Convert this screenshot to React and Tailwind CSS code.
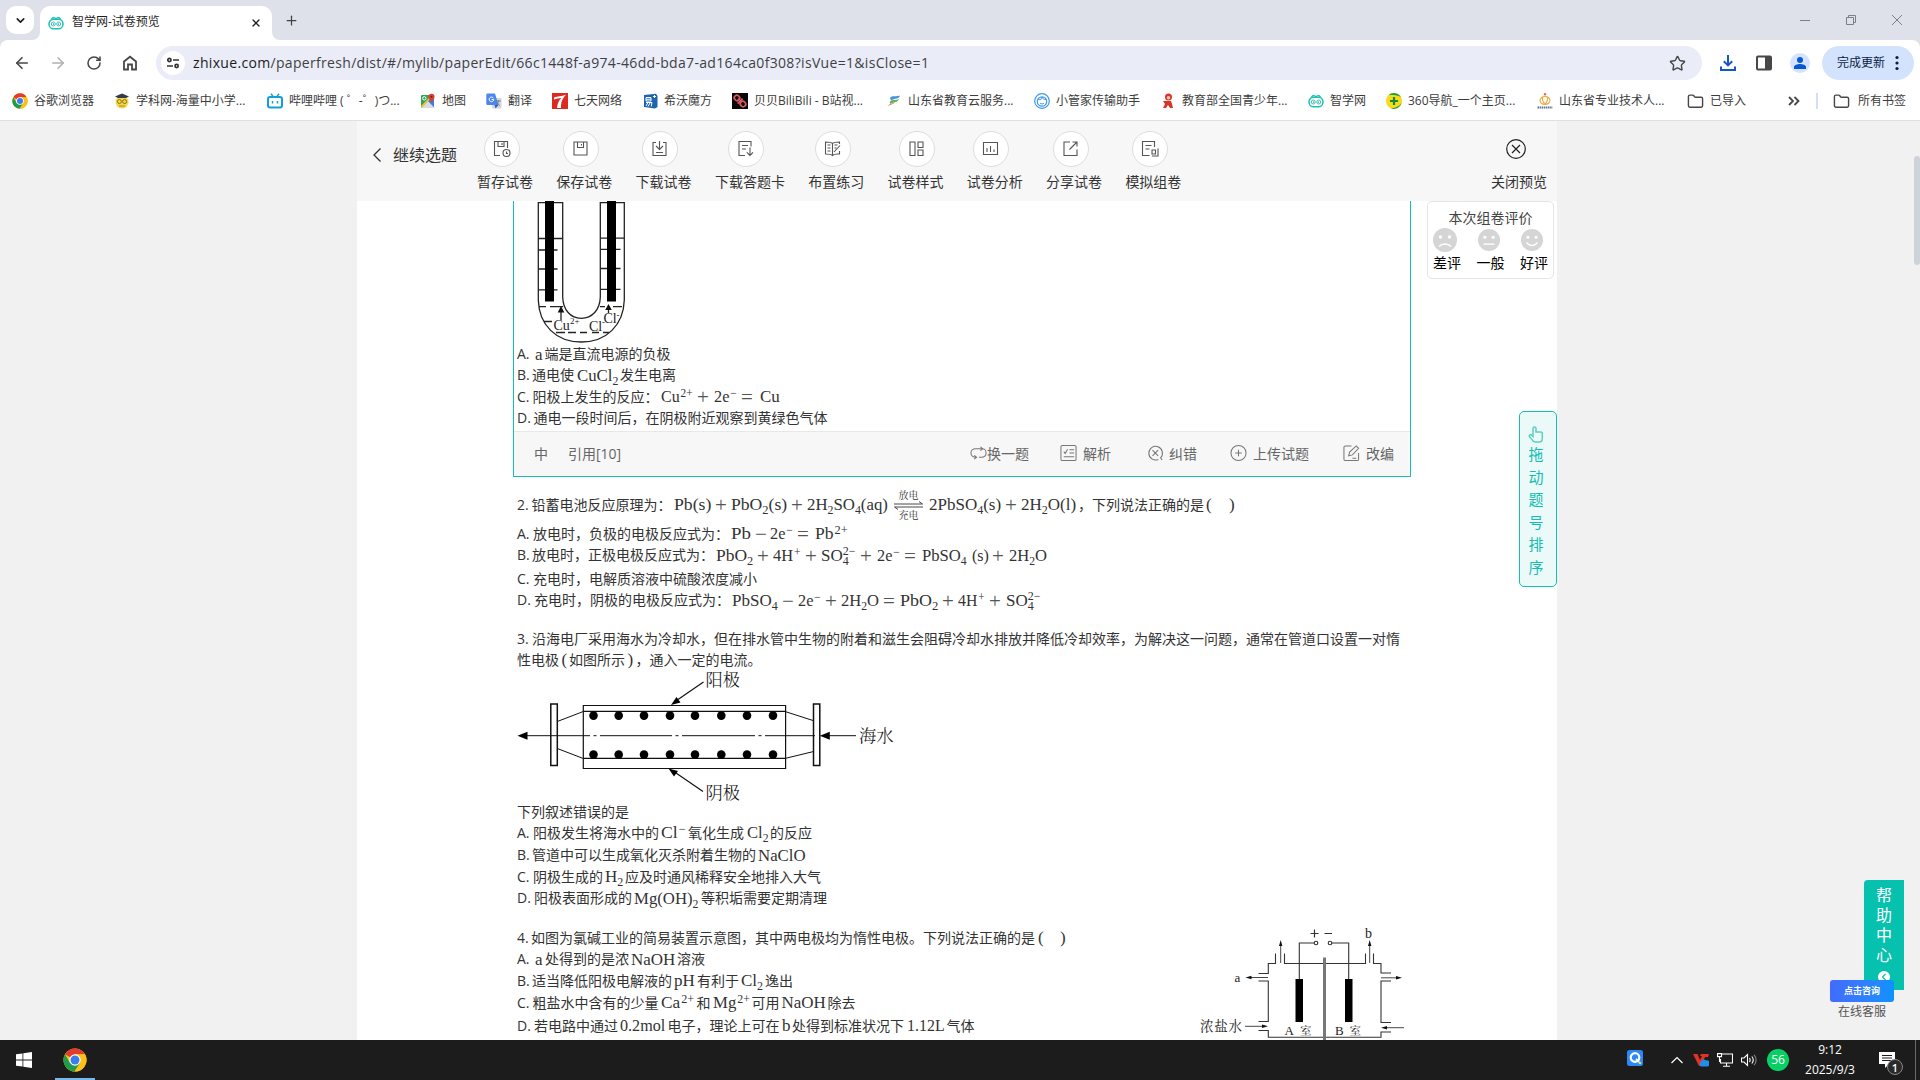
import React, { useLayoutEffect, useRef } from "react";
import { ArrowLeft, ArrowRight, RotateCw, Star, ChevronDown, Plus, X, Folder } from "lucide-react";

const UI = "font-['Open_Sans','Noto_Sans_CJK_SC',sans-serif]";

/* ---------- shared logos ---------- */
function ChromeLogo({ size = 16 }) {
  return (
    <svg width={size} height={size} viewBox="0 0 24 24">
      <circle cx="12" cy="12" r="11.5" fill="#fbc116" />
      <path d="M12 12 2.04 6.25A11.5 11.5 0 0 1 21.96 6.25H12Z" fill="#e33b2e" />
      <path d="M2.04 6.25A11.5 11.5 0 0 0 11.5 23.5L17 14.9 7 14.9Z" fill="#1e9b4b" />
      <path d="M12 6.25h9.96A11.5 11.5 0 0 1 11.5 23.5L17 14.9Z" fill="#fbc116" />
      <circle cx="12" cy="12" r="5.7" fill="#fff" />
      <circle cx="12" cy="12" r="4.5" fill="#3b7ded" />
    </svg>
  );
}

function ZhixueLogo() {
  return (
    <svg width="16" height="16" viewBox="0 0 16 16" fill="none" stroke="#1fc0b0">
      <rect x="1" y="4.2" width="14" height="9.6" rx="4.6" strokeWidth="1.5" />
      <path d="M3.5 4C5 2 7 2.2 8 4c1-1.8 3-2 4.5 0" strokeWidth="1.4" />
      <circle cx="5.3" cy="9" r="2" strokeWidth="0.9" />
      <circle cx="10.7" cy="9" r="2" strokeWidth="0.9" />
      <circle cx="5.6" cy="9" r="0.6" fill="#333" stroke="none" />
      <circle cx="10.4" cy="9" r="0.6" fill="#333" stroke="none" />
    </svg>
  );
}

const marks = {
  chrome: <ChromeLogo />,
  xueke: (
    <svg width="16" height="16" viewBox="0 0 16 16">
      <circle cx="8" cy="9" r="6.5" fill="#f3d64a" />
      <path d="M1 3.5 8 .5l7 3-3 1.5H4Z" fill="#333a4d" />
      <circle cx="5.4" cy="8.5" r="2" fill="none" stroke="#8b7419" />
      <circle cx="10.6" cy="8.5" r="2" fill="none" stroke="#8b7419" />
      <path d="M5 13h6" stroke="#a98b1f" />
    </svg>
  ),
  bili: (
    <svg width="16" height="16" viewBox="0 0 16 16" fill="none" stroke="#139fd9">
      <rect x="1" y="4" width="14" height="10.5" rx="2" strokeWidth="2" />
      <path d="m4 .8 2 2.6M12 .8l-2 2.6M5.5 8v2.5M10.5 8v2.5" strokeWidth="1.5" />
    </svg>
  ),
  map: (
    <svg width="16" height="16" viewBox="0 0 16 16">
      <rect x="1" y="2" width="13" height="13" rx="1" fill="#34a35a" />
      <path d="M1 15 8 8l7 7Z" fill="#d9dde3" />
      <path d="m8 8 4-4 2 2v8Z" fill="#3b7ded" />
      <path d="M1 13 12 2h2L2 15Z" fill="#f5c33b" />
      <path d="M11.5 9.5C9 6.5 8.5 5 8.5 3.7a3 3 0 0 1 6 0c0 1.3-.5 2.8-3 5.8Z" fill="#df3e34" />
      <circle cx="11.5" cy="3.7" r="1" fill="#7c1f1a" />
      <circle cx="4.3" cy="5.3" r="1.7" fill="none" stroke="#fff" />
    </svg>
  ),
  trans: (
    <svg width="16" height="16" viewBox="0 0 16 16">
      <rect x="6" y="5" width="9.5" height="10.5" rx="1" fill="#d3d6dc" />
      <path d="M1.5.5H9L12.5 12h-11A1.2 1.2 0 0 1 .3 10.8V1.7A1.2 1.2 0 0 1 1.5.5Z" fill="#4c86ee" />
      <path d="M7.5 5.2A2.3 2.3 0 1 0 7.8 6.5H5.6" stroke="#fff" fill="none" />
      <path d="M10 8h5M12.5 7v1c0 2-1 3.5-2.5 4.5M11 9.5c.5 1.5 2 2.5 3 3" stroke="#6b7785" fill="none" strokeWidth=".8" />
      <path d="m8.5 12 4 0-3 3.5Z" fill="#2f62c9" />
    </svg>
  ),
  seven: (
    <svg width="16" height="16" viewBox="0 0 16 16">
      <rect width="16" height="16" fill="#dc2a20" />
      <path d="M2 4.5C6 3 9 3.8 14 1.5 10 6 9 9 9 15H5C5.5 10 7 7 9.5 5 7 5.5 4.5 5.6 2 6.5Z" fill="#fff" />
    </svg>
  ),
  seewo: (
    <svg width="16" height="16" viewBox="0 0 16 16">
      <path d="M2 2 14 .8 15.5 3v11L13 15.5 2 14Z" fill="#1d63ae" />
      <path d="M4 4.5h5v3.5H4ZM4 6.2h5M4 9.5h6l-.8 4M6 9.5l-2 3.5M8 10l-2 3.5M11 3.5h3M12.5 2v3" stroke="#fff" fill="none" />
    </svg>
  ),
  beibei: (
    <svg width="16" height="16" viewBox="0 0 16 16">
      <rect width="16" height="16" fill="#080808" />
      <g fill="none" stroke="#dd5a61" strokeWidth="1.7" transform="rotate(45 8 8)">
        <rect x="1" y="5.5" width="5.5" height="5" rx="2.4" />
        <rect x="9.5" y="5.5" width="5.5" height="5" rx="2.4" />
        <path d="M5 8h1.5M8.2 4.5v7" />
      </g>
    </svg>
  ),
  cloud: (
    <svg width="16" height="16" viewBox="0 0 16 16">
      <path d="M4 5c2-3 6-1 10-2.5-1 4-5 2.5-9 5Z" fill="#4a94d8" />
      <path d="M3.5 9c3-3.5 6-1 9.5-3-1.5 4-5 2.5-8.5 5Z" fill="#5fb45d" />
      <path d="M1.5 13.5C3 10 6 11.5 9 8.5 8 12 4 11.5 1.5 13.5Z" fill="#e88a77" />
    </svg>
  ),
  butler: (
    <svg width="16" height="16" viewBox="0 0 16 16" fill="none" stroke="#3f97ec">
      <circle cx="8" cy="8" r="7.3" strokeWidth="1.2" />
      <circle cx="8" cy="8.5" r="4.7" strokeWidth="1.2" />
      <path d="M4 6.5c3 .8 4-1 4-2.5.5 2 2 2.5 4 2.5M6 10c1.2 1.3 2.8 1.3 4 0" />
    </svg>
  ),
  youth: (
    <svg width="16" height="16" viewBox="0 0 16 16">
      <circle cx="8.5" cy="4" r="3.5" fill="#d8352a" />
      <circle cx="8.5" cy="4.8" r="1.8" fill="#f5c9a5" />
      <path d="M5 8h6l1 3 1 4h-3l-2-3-2 3H3l2-4-2-3Z" fill="#d8352a" />
    </svg>
  ),
  zhixue: <ZhixueLogo />,
  s360: (
    <svg width="16" height="16" viewBox="0 0 16 16">
      <circle cx="8" cy="8" r="8" fill="#f8dc17" />
      <path d="M2.500 2.200A8 8 0 0 1 15 4.200C11 1.800 6.500 2 2.500 2.200ZM15.800 9A8 8 0 0 1 5 15.400C10 15 14 13 15.800 9Z" fill="#17a04a" />
      <path d="M8 4v8M4 8h8" stroke="#17873d" strokeWidth="2.2" />
    </svg>
  ),
  sdpro: (
    <svg width="16" height="16" viewBox="0 0 16 16" fill="none">
      <circle cx="8" cy="1.2" r="1.2" fill="#e8663a" />
      <path d="M8 3.5c-3 0-5 2-5 4s2 4 5 4 5-2 5-4-2-4-5-4ZM6 4c-1.5 3 0 5 2 7M10 4c1.5 3 0 5-2 7" stroke="#f0a93f" strokeWidth="1.1" />
      <path d="M.5 14.5h15" stroke="#5a7394" strokeWidth="2" strokeDasharray="1.5 .6" />
    </svg>
  ),
  folder: <Folder size={17} strokeWidth={2} color="#474747" />,
};

/* left edges of the bookmarks on the bar, used to derive their widths */
const bookmarks = [
  [12, "chrome", "谷歌浏览器"],
  [114, "xueke", "学科网-海量中小学..."],
  [267, "bili", "哔哩哔哩 ( ゜-゜)つ..."],
  [420, "map", "地图"],
  [486, "trans", "翻译"],
  [552, "seven", "七天网络"],
  [642, "seewo", "希沃魔方"],
  [732, "beibei", "贝贝BiliBili - B站视..."],
  [886, "cloud", "山东省教育云服务..."],
  [1034, "butler", "小管家传输助手"],
  [1160, "youth", "教育部全国青少年..."],
  [1308, "zhixue", "智学网"],
  [1386, "s360", "360导航_一个主页..."],
  [1537, "sdpro", "山东省专业技术人..."],
  [1687, "folder", "已导入"],
  [1788],
];

function TabStrip() {
  return (
    <div className="flex h-10 items-end bg-[#dee1e9] pl-1.5">
      <div className="mb-1.5 flex h-7 w-7 items-center justify-center rounded-[10px] bg-white">
        <ChevronDown size={13} strokeWidth={3} color="#1f1f1f" />
      </div>
      <svg width="8" height="8" viewBox="0 0 8 8" className="-ml-0.5"><path d="M8 0v8H0a8 8 0 0 0 8-8Z" fill="#fff" /></svg>
      <div className="flex h-[34px] w-[232px] items-center rounded-t-[10px] bg-white pr-2.5 pl-2">
        <ZhixueLogo />
        <span className="ml-2 flex-1 -translate-y-px text-[12px] leading-4 text-[#1f1f1f]">智学网-试卷预览</span>
        <X size={12} strokeWidth={2.6} color="#1f1f1f" />
      </div>
      <svg width="8" height="8" viewBox="0 0 8 8"><path d="M0 0v8h8a8 8 0 0 1-8-8Z" fill="#fff" /></svg>
      <div className="flex h-10 w-[22px] items-center justify-center"><Plus size={15} strokeWidth={2} color="#444" /></div>
      <div className="ml-auto flex h-10 items-center text-[#7c7f86]">
        <svg width="46" height="40" viewBox="0 0 46 40" stroke="currentColor"><path d="M18 20.5h10" /></svg>
        <svg width="46" height="40" viewBox="0 0 46 40" stroke="currentColor" fill="none"><path d="M18.5 17.5h7v7h-7ZM20.5 17.5v-2h7v7h-2" /></svg>
        <svg width="46" height="40" viewBox="0 0 46 40" stroke="currentColor"><path d="m18 15 10 10M28 15 18 25" /></svg>
      </div>
    </div>
  );
}

function Toolbar() {
  return (
    <div className="flex h-[46px] items-center rounded-t-lg bg-white pl-3">
      <div className="flex w-36 items-center">
        <div className="w-9 pl-px"><ArrowLeft size={18} strokeWidth={2.2} color="#474747" /></div>
        <div className="w-9 pl-px"><ArrowRight size={18} strokeWidth={2} color="#b0b0b0" /></div>
        <div className="w-9 pl-0.5"><RotateCw size={16} strokeWidth={2.3} color="#474747" /></div>
        <div className="w-9 pl-0.5">
          <svg width="16" height="16" viewBox="0 0 16 16" fill="none" stroke="#474747" strokeWidth="1.8"><path d="M2 6.5 8 1.7l6 4.8v8h-4v-5H6v5H2Z" /></svg>
        </div>
      </div>
      <div className="flex h-[34px] w-[1546px] items-center rounded-full bg-[#eaedf7] pr-4 pl-[5px]">
        <div className="flex h-6 w-6 items-center justify-center rounded-full bg-white">
          <svg width="14" height="14" viewBox="0 0 14 14" fill="none" stroke="#333" strokeWidth="1.7"><circle cx="3.4" cy="4" r="1.6" /><path d="M7 4h6M1 10h6" /><circle cx="10.6" cy="10" r="1.6" /></svg>
        </div>
        <span className="ml-2 w-[745px] -translate-y-px text-[14px] tracking-[0.32px] whitespace-nowrap text-[#3f4145]"><span className="text-[#1b1b1f]">zhixue.com</span>/paperfresh/dist/#/mylib/paperEdit/66c1448f-a974-46dd-bda7-ad164ca0f308?isVue=1&amp;isClose=1</span>
        <div className="ml-auto"><Star size={17} strokeWidth={2} color="#474747" /></div>
      </div>
      <svg className="ml-[18px]" width="16" height="16" viewBox="0 0 16 16" fill="none" stroke="#1456c4" strokeWidth="2"><path d="M8 0v10M3.8 6.2 8 10.4l4.2-4.2M1 11.5V15h14v-3.5" /></svg>
      <svg className="ml-5" width="16" height="16" viewBox="0 0 16 16"><rect x="1" y="1.5" width="14" height="13" rx="1" fill="none" stroke="#474747" strokeWidth="2" /><path d="M9 2h6v12H9Z" fill="#474747" /></svg>
      <div className="ml-[18px] flex h-5 w-5 items-center justify-center rounded-full bg-[#d3e3fd]">
        <svg width="14" height="14" viewBox="0 0 14 14" fill="#0b57d0"><circle cx="7" cy="4" r="3" /><path d="M1 13V11c0-2 3.5-3 6-3s6 1 6 3v2Z" /></svg>
      </div>
      <div className="ml-3 flex h-[34px] w-[92px] items-center rounded-full bg-[#d3e3fd] pl-[15px] text-[12px] text-[#0a1d45]">
        完成更新
        <svg className="ml-2.5" width="4" height="16" viewBox="0 0 4 16" fill="#0a1d45"><circle cx="2" cy="2.5" r="1.6" /><circle cx="2" cy="8" r="1.6" /><circle cx="2" cy="13.5" r="1.6" /></svg>
      </div>
    </div>
  );
}

function BookmarkBar() {
  return (
    <div className="flex h-[35px] items-center border-b border-[#dfe0e2] bg-white pb-1 pl-3 text-[12px] text-[#3c3c3c]">
      {bookmarks.slice(0, -1).map(([x, icon, label], i) => (
        <div key={i} className="flex shrink-0 items-center gap-1.5 whitespace-nowrap" style={{ width: bookmarks[i + 1][0] - x }}>
          {marks[icon]}
          <span>{label}</span>
        </div>
      ))}
      <svg width="12" height="10" viewBox="0 0 12 10" fill="none" stroke="#474747" strokeWidth="1.8"><path d="m1 1 4 4-4 4M6.5 1l4 4-4 4" /></svg>
      <div className="ml-4 h-4 w-0.5 bg-[#d3dffa]" />
      <div className="ml-[15px] flex items-center gap-2">{marks.folder}<span>所有书签</span></div>
    </div>
  );
}

/* ---------- paper header ---------- */
const tools = [
  ["暂存试卷", "ml-[7px]", <path d="M7 15.5H1.5v-14h13V8M5 1.5v5h6v-5M9 3v2M13.5 9.5a3.5 3.5 0 1 1 0 7 3.5 3.5 0 0 1 0-7ZM13.5 11.5V13.5h1.5" />],
  ["保存试卷", "ml-[7px]", <path d="M2 2h13v13H2ZM5.5 2v5.5h6V2M9.5 4v1.5" />],
  ["下载试卷", "ml-1.5", <path d="M5 2.5H2v13h13v-13h-3M8.5 1v8M5 6l3.5 3.5L12 6M5 12.5h7" />],
  ["下载答题卡", "ml-[13px]", <path d="M8 15.5H2v-14h12v5M5 5.5h6M5 9h4M13 7.5v8M9.8 12.3l3.2 3.2 3-3.2" />],
  ["布置练习", "ml-[7px]", <path d="M8.5 3.5C7 2 4 2 1.5 2v12c2.5 0 5.5 0 7 1.5 1.5-1.5 3-1.5 5-1.5h2v-3M8.5 3.5C10 2 13 2 15.5 2v2M8.5 3.5v12M3.5 5h3M3.5 8h3M3.5 11h3M10.5 5h3M10.5 8h2M10 12l6-6.5" />],
  ["试卷样式", "ml-3", <path d="M2 2h5v13.5H2ZM10 2h5v5.5h-5ZM10 10h5v5.5h-5Z" />],
  ["试卷分析", "ml-1.5", <path d="M1.5 2.5h14v12h-14ZM5 8v4M8.5 6v6M12 9.5V12" />],
  ["分享试卷", "ml-[7px]", <path d="M8 2H2v13.5h13V9.5M10.5 2H15v4.5M15 2 7.5 9.5" />],
  ["模拟组卷", "ml-[7px]", <path d="M8.5 15.5h-7v-14h12V7M4.5 5.5h6M4.5 9h4M11 10h3.5v4H11ZM17 8.5v7.5h-6" />],
];

function PaperHeader() {
  return (
    <div className="flex h-20 shrink-0 bg-[#f7f7f7] text-[14px] text-[#333]">
      <div className="mt-[22px] flex h-6 w-[120px] items-center pl-4 text-[16px]">
        <svg width="8" height="14" viewBox="0 0 8 14" fill="none" stroke="#333" strokeWidth="1.3"><path d="M7.5.5 1 7l6.5 6.5" /></svg>
        <span className="ml-3">继续选题</span>
      </div>
      <div className="flex gap-[23.3px]">
        {tools.map(([label, pos, icon]) => (
          <div key={label} className="pt-2.5">
            <div className={"flex h-9 w-9 items-center justify-center rounded-full border border-[#ddd] bg-white " + pos}>
              <svg width="18" height="18" viewBox="0 0 18 18" fill="none" stroke="#555" strokeWidth="1.1">{icon}</svg>
            </div>
            <div className="mt-[5px] leading-5 whitespace-nowrap">{label}</div>
          </div>
        ))}
      </div>
      <div className="mr-2.5 ml-auto pt-[18px]">
        <svg className="ml-[15px]" width="20" height="20" viewBox="0 0 20 20" fill="none" stroke="#222" strokeWidth="1.2"><circle cx="10" cy="10" r="9.3" /><path d="m6 6 8 8M14 6l-8 8" /></svg>
        <div className="mt-[13px] leading-5">关闭预览</div>
      </div>
    </div>
  );
}

/* ---------- formula text ---------- */
/* "_x" is a subscript, "^x" a superscript; "_x^y" stacks them. The formula is stretched to `width`. */
function Formula({ text, width }) {
  const ref = useRef(null);
  useLayoutEffect(() => {
    if (width) ref.current.style.transform = `scaleX(${width / ref.current.offsetWidth})`;
  }, [width]);
  const parts = text.match(/_\w\^[\d+\u2212]+|_\w|\^[\d+\u2212]+|[^_^]+/g);
  return (
    <span ref={ref} className="inline-flex origin-left items-center font-['Liberation_Serif','Noto_Serif_CJK_SC',serif] text-[17px] leading-5 text-[#333]">
      {parts.map((p, i) => {
        if (/^_\w\^/.test(p)) {
          return (
            <span key={i} className="inline-flex flex-col text-[12px] leading-[10px]">
              <span>{p.slice(3)}</span>
              <span>{p[1]}</span>
            </span>
          );
        }
        if (p[0] === "_") return <span key={i} className="translate-y-[5px] text-[12px]">{p.slice(1)}</span>;
        if (p[0] === "^") return <span key={i} className="ml-px -translate-y-1 text-[12px]">{p.slice(1)}</span>;
        return <span key={i}>{p}</span>;
      })}
    </span>
  );
}

function ReversibleArrow() {
  return (
    <span className="flex w-[29px] flex-col items-center font-['Liberation_Serif','Noto_Serif_CJK_SC','Noto_Sans_CJK_SC',serif] text-[10px] leading-[11px]">
      <span>放电</span>
      <svg width="29" height="9" viewBox="0 0 29 9" fill="none" stroke="#333" strokeWidth=".9"><path d="M0 3h28.5L25 .5M29 6H.5L4 8.5" /></svg>
      <span>充电</span>
    </span>
  );
}

/* cells: [left edge, kind, text, width]; t = text, m = formula, o = operator, r = reversible arrow */
const gapBefore = { t: 2, o: 5, r: 6, m: 5 };

function formulaWidth(cell, next) {
  if (cell[3]) return cell[3];
  if (!next || cell[2].length === 1) return undefined;
  return next[0] - cell[0] - gapBefore[next[1]];
}

function Line({ h, cells }) {
  return (
    <div className="flex items-center whitespace-nowrap" style={{ height: h }}>
      {cells.map((cell, i) => {
        const [x, kind, text] = cell;
        const next = cells[i + 1];
        return (
          <span key={i} className="flex shrink-0 items-center" style={{ width: next ? next[0] - x : undefined }}>
            {kind === "t" && <span className="-translate-y-px">{text}</span>}
            {kind === "m" && <Formula text={text} width={formulaWidth(cell, next)} />}
            {kind === "o" && <span className="-ml-px font-['Liberation_Serif',serif] text-[21px] leading-5 text-[#555]">{text}</span>}
            {kind === "r" && <ReversibleArrow />}
          </span>
        );
      })}
    </div>
  );
}

function TubeFigure() {
  return (
    <svg className="block" width="130" height="143" viewBox="517 201 130 143" fill="none" stroke="#222" strokeWidth="1.3">
      <path d="M538.3 202.7V300C539 325 556 342 581.3 342S623.5 325 624.3 300V202.7H600.3V297C600 310 592 318.3 581.3 318.3S563 310 562.7 297V202.7Z" />
      <path d="M538 238.5h24.5M600.5 238.2H624M538 250h19.5M538 269h19.5M538 289.8h19.5M600.5 249.3h20M600.5 268.5h20M600.5 289.3h20" />
      <path d="M539 306.7h7M550 306.7h13M600 306.7h5M613 306.7h9M544 321.5h8M556 332.5h9M568 332.5h8M580 332.5h7M592 332.5h7M603 332.5h6" />
      <path d="M561 320v-8M608.5 313v-6" />
      <path d="m561 306-3.3 6.5h6.6ZM608.5 304l-3.3 6h6.6Z" fill="#111" stroke="none" />
      <path d="M545 201h9v100.5h-9ZM607 201h9v100.5h-9Z" fill="#000" stroke="none" />
      <g fill="#222" stroke="none" fontFamily="Liberation Serif" fontSize="14">
        <text x="553.5" y="330">Cu</text>
        <text x="570" y="324" fontSize="9">2+</text>
        <text x="589" y="330.5">Cl</text>
        <text x="602" y="325" fontSize="9">-</text>
        <text x="603.5" y="323">Cl</text>
        <text x="616.5" y="317.5" fontSize="9">-</text>
      </g>
    </svg>
  );
}

const dotXs = [593.5, 618.7, 644, 670, 695, 721.3, 747, 773];

function PipeFigure() {
  return (
    <svg className="block overflow-visible" width="386" height="131" viewBox="517 671 386 131" fill="none" stroke="#111" strokeWidth="1.2">
      <path d="M583.3 705.5h202.3v63H583.3Z" />
      <path d="M583.3 711.3h202.3M583.3 758.3h202.3" />
      <path d="M550.8 704h6.5v61.5h-6.5ZM813.5 704h6.3v61.5h-6.3Z" strokeWidth="1.5" />
      <path d="M557.3 721.5l26-10M557.3 748.5l26 10M785.6 711.7l28 9M785.6 758.3l28-6.8" strokeWidth="1" />
      <path d="M524 735.7h66M593.5 735.7h3M600 735.7h72M675.5 735.7h3M682 735.7h73M758.5 735.7h3M765 735.7h50M826 735.7h30" strokeWidth="1" />
      {dotXs.map((x) => (
        <g key={x} fill="#000" stroke="none">
          <circle cx={x} cy="715.6" r="4.3" />
          <circle cx={x} cy="754.6" r="4.3" />
        </g>
      ))}
      <path d="M703.5 682 678 699.5M703 791.5 676 773" />
      <path d="m671 705 5.5-8 4 5.5ZM668.5 768.5l9.5 2.5-4 5.5ZM517.5 735.7l10-4v8ZM819.8 735.7l10-4v8Z" fill="#000" stroke="none" />
      <g fill="#111" stroke="none" fontSize="17.3" fontFamily="'Noto Serif CJK SC','Noto Sans CJK SC',serif" fontWeight="300">
        <text x="705.5" y="685.5">阳极</text>
        <text x="705.5" y="799">阴极</text>
        <text x="859" y="742">海水</text>
      </g>
    </svg>
  );
}

function CellFigure() {
  return (
    <svg className="block" width="212" height="116" viewBox="1196 924 212 116" fill="none" stroke="#333" strokeWidth="1.1">
      <path d="M1258.5 973.5H1268.3V963.5H1275.5V953.5M1284.5 953.5V963.5H1365.5V953.5M1373.5 953.5V963.5H1381V973H1391" />
      <path d="M1258.5 981H1268.3V1021.5H1258.5M1391 981H1381V1022.5H1391M1391 1032H1381V1037.3H1268.3V1030.5H1258.5" />
      <path d="M1324.5 957.5V1040" stroke="#777" strokeWidth="3" />
      <path d="M1299.3 980V943H1314M1331 943h17.7v37" />
      <circle cx="1316" cy="943" r="1.8" fill="#fff" />
      <circle cx="1330" cy="943" r="1.8" fill="#fff" />
      <path d="M1295.5 979h7.5v43h-7.5ZM1345 979h7.5v43h-7.5Z" fill="#000" stroke="none" />
      <path d="M1280.7 963v-17M1369.7 963v-17M1268 977.5h-17M1381 977.8h18M1245 1026.3h20M1404 1027.7h-20" strokeWidth=".9" />
      <path d="m1280.7 940-1.7 6h3.4ZM1369.7 940l-1.7 6h3.4ZM1245.5 977.5l6-1.7v3.4ZM1402 977.8l-6-1.7v3.4ZM1268 1026.3l-6-1.7v3.4ZM1381 1027.7l6-1.7v3.4Z" fill="#111" stroke="none" />
      <path d="M1310.5 933.5h8M1314.5 929.5v8M1324.5 933.5h7.5" strokeWidth="1.2" />
      <g fill="#222" stroke="none" fontSize="13" fontFamily="'Liberation Serif','Noto Serif CJK SC','Noto Sans CJK SC',serif">
        <text x="1234.5" y="982">a</text>
        <text x="1365" y="938" fontSize="14">b</text>
        <text x="1284.5" y="1034.5">A</text>
        <text x="1300" y="1034.5" fontSize="11.5">室</text>
        <text x="1335" y="1034.5">B</text>
        <text x="1349.5" y="1034.5" fontSize="11.5">室</text>
        <text x="1200" y="1031" fontSize="13.5" letterSpacing=".8">浓盐水</text>
      </g>
    </svg>
  );
}

const actions = [
  ["换一题", "w-[90px]", "", <path d="M6.5 13.5C3 13.5 1 12 1 9s2-4.5 5-4.5h6.5M4.5 11.5l2.5 2-2.5 2M9.5 13.5H12c3 0 5-1.5 5-4.5s-2-4.5-3.5-4.5M11 2.5l2.5 2-2.5 2" />],
  ["解析", "w-[87px]", "ml-1.5", <path d="M2.5 1h13a1.5 1.5 0 0 1 1.5 1.5v13a1.5 1.5 0 0 1-1.5 1.5h-13A1.5 1.5 0 0 1 1 15.5v-13A1.5 1.5 0 0 1 2.5 1ZM4 7.5 5.5 9.5 8 5M10 5.5h5M10 9h5M4 13h11" />],
  ["纠错", "w-[83px]", "ml-[5px]", <path d="M14.5 14A7.2 7.2 0 1 0 12 15.8M14 13.5 16 16.5M5.8 6l6 6M11.8 6l-6 6" />],
  ["上传试题", "w-[113px]", "ml-1.5", <path d="M9 1a8 8 0 1 1 0 16A8 8 0 0 1 9 1ZM5.5 9h7M9 5.5v7" />],
  ["改编", "w-[60px]", "ml-1.5", <path d="M9 1.5H2.5A1.5 1.5 0 0 0 1 3v12.5A1.5 1.5 0 0 0 2.5 17h12.5a1.5 1.5 0 0 0 1.5-1.5V9M6 12l1-4L14 1.5l2.5 2.5L10 11ZM10 14.5h4" />],
];

function QuestionList() {
  return (
    <div className="ml-[156px] w-[898px] text-[14px] text-[#333]">
      <div className="h-[276px] border border-t-0 border-[#13bfb2]">
        <div className="h-[230px] pl-[3px]">
          <TubeFigure />
          <Line h={21} cells={[[517, "t", "A."], [535, "m", "a"], [544.5, "t", "端是直流电源的负极"]]} />
          <Line h={21} cells={[[517, "t", "B."], [532, "t", "通电使"], [576.5, "m", "CuCl_2"], [620, "t", "发生电离"]]} />
          <Line h={22} cells={[[517, "t", "C."], [532.5, "t", "阳极上发生的反应："], [661, "m", "Cu^2+"], [698, "o", "+"], [714, "m", "2e^−"], [742, "o", "="], [760, "m", "Cu", 20]]} />
          <Line h={21} cells={[[517, "t", "D."], [533.5, "t", "通电一段时间后，在阴极附近观察到黄绿色气体"]]} />
        </div>
        <div className="flex h-[45px] items-center border-t border-[#e8e8e8] bg-[#f7f7f7] pb-0.5 pl-5 text-[#666]">
          <span className="w-[34px]">中</span>
          <span className="w-[402px]">引用[10]</span>
          {actions.map(([label, w, gap, icon]) => (
            <span key={label} className={"flex shrink-0 items-center whitespace-nowrap " + w}>
              <svg width="17" height="18" viewBox="0 0 18 18" fill="none" stroke="#777" strokeWidth="1.1">{icon}</svg>
              <span className={gap}>{label}</span>
            </span>
          ))}
        </div>
      </div>

      <div className="mt-3.5 pl-1">
        <Line h={28} cells={[[517, "t", "2."], [531.5, "t", "铅蓄电池反应原理为："], [673.5, "m", "Pb(s)"], [716, "o", "+"], [731, "m", "PbO_2(s)"], [792, "o", "+"], [807, "m", "2H_2SO_4(aq)"], [894, "r"], [929, "m", "2PbSO_4(s)"], [1006, "o", "+"], [1021, "m", "2H_2O(l)"], [1078, "t", "，下列说法正确的是"], [1206, "m", "("], [1229, "m", ")"]]} />
        <div className="mt-1" />
        <Line h={22} cells={[[517, "t", "A."], [533, "t", "放电时，负极的电极反应式为："], [731, "m", "Pb"], [756, "o", "−"], [770, "m", "2e^−"], [798, "o", "="], [815, "m", "Pb^2+", 33]]} />
        <Line h={21} cells={[[517, "t", "B."], [532, "t", "放电时，正极电极反应式为："], [716, "m", "PbO_2"], [758, "o", "+"], [773, "m", "4H^+"], [806, "o", "+"], [821, "m", "SO_4^2−"], [861, "o", "+"], [877, "m", "2e^−"], [905, "o", "="], [922, "m", "PbSO_4"], [972, "m", "(s)", 17], [993, "o", "+"], [1009, "m", "2H_2O", 38]]} />
        <div className="mt-0.5" />
        <Line h={22} cells={[[517, "t", "C."], [533, "t", "充电时，电解质溶液中硫酸浓度减小"]]} />
        <Line h={21} cells={[[517, "t", "D."], [534, "t", "充电时，阴极的电极反应式为："], [732, "m", "PbSO_4"], [783, "o", "−"], [798, "m", "2e^−"], [826, "o", "+"], [841, "m", "2H_2O"], [884, "o", "="], [900, "m", "PbO_2"], [943, "o", "+"], [958, "m", "4H^+"], [990, "o", "+"], [1006, "m", "SO_4^2−", 35]]} />
      </div>

      <div className="mt-[18px] pl-1">
        <Line h={20} cells={[[517, "t", "3."], [532, "t", "沿海电厂采用海水为冷却水，但在排水管中生物的附着和滋生会阻碍冷却水排放并降低冷却效率，为解决这一问题，通常在管道口设置一对惰"]]} />
        <Line h={22} cells={[[517, "t", "性电极"], [561.5, "m", "("], [569, "t", "如图所示"], [627.5, "m", ")"], [635.5, "t", "，通入一定的电流。"]]} />
        <PipeFigure />
        <Line h={20} cells={[[517, "t", "下列叙述错误的是"]]} />
        <Line h={22} cells={[[517, "t", "A."], [533, "t", "阳极发生将海水中的"], [661, "m", "Cl^−"], [688, "t", "氧化生成"], [746.5, "m", "Cl_2"], [770, "t", "的反应"]]} />
        <Line h={23} cells={[[517, "t", "B."], [532, "t", "管道中可以生成氧化灭杀附着生物的"], [758, "m", "NaClO", 47.5]]} />
        <Line h={20} cells={[[517, "t", "C."], [533, "t", "阴极生成的"], [605, "m", "H_2"], [625, "t", "应及时通风稀释安全地排入大气"]]} />
        <Line h={23} cells={[[517, "t", "D."], [534, "t", "阳极表面形成的"], [634, "m", "Mg(OH)_2"], [701, "t", "等积垢需要定期清理"]]} />
      </div>

      <div className="mt-[14px] flex pl-1">
        <div className="w-[679px] shrink-0 pt-1">
          <Line h={20} cells={[[517, "t", "4."], [531, "t", "如图为氯碱工业的简易装置示意图，其中两电极均为惰性电极。下列说法正确的是"], [1038, "m", "("], [1060, "m", ")"]]} />
          <Line h={23} cells={[[517, "t", "A."], [535, "m", "a"], [545, "t", "处得到的是浓"], [631, "m", "NaOH"], [677, "t", "溶液"]]} />
          <Line h={20} cells={[[517, "t", "B."], [532, "t", "适当降低阳极电解液的"], [674, "m", "pH"], [697, "t", "有利于"], [741, "m", "Cl_2"], [765, "t", "逸出"]]} />
          <Line h={24} cells={[[517, "t", "C."], [532.5, "t", "粗盐水中含有的少量"], [661, "m", "Ca^2+"], [696.5, "t", "和"], [713, "m", "Mg^2+"], [751.5, "t", "可用"], [781.5, "m", "NaOH"], [827.5, "t", "除去"]]} />
          <Line h={22} cells={[[517, "t", "D."], [534, "t", "若电路中通过"], [620, "m", "0.2mol"], [667.5, "t", "电子，理论上可在"], [782, "m", "b"], [792, "t", "处得到标准状况下"], [907, "m", "1.12L"], [946.5, "t", "气体"]]} />
        </div>
        <CellFigure />
      </div>
    </div>
  );
}

function Face({ size, mouth }) {
  return (
    <svg width={size} height={size} viewBox="0 0 24 24">
      <circle cx="12" cy="12" r="12" fill="#d5d5d5" />
      <circle cx="7.5" cy="9" r="1.7" fill="#fff" />
      <circle cx="16.5" cy="9" r="1.7" fill="#fff" />
      <path d={mouth} stroke="#fff" strokeWidth="1.5" fill="none" />
    </svg>
  );
}

function Rating() {
  return (
    <div className="ml-4 h-[78px] w-[127px] rounded-[5px] border border-[#e5e5e5] pt-1.5 text-[14px]">
      <div className="text-center leading-5 text-[#444]">本次组卷评价</div>
      <div className="flex gap-[15.5px] pl-[5px] leading-5 text-black">
        {[[24, "差评", "M6 18.5c3-3.5 9-3.5 12 0"], [22, "一般", "M6 16.5h12"], [22, "好评", "M6 14.5c3 4.5 9 4.5 12 0"]].map(([s, label, mouth]) => (
          <div key={label} className="w-7">
            <div className={"flex h-6 items-center " + (s === 22 ? "pl-px" : "")}><Face size={s} mouth={mouth} /></div>
            <div className="mt-px">{label}</div>
          </div>
        ))}
      </div>
    </div>
  );
}

function SortHandle() {
  return (
    <div className="absolute top-[411px] left-[1519px] flex h-44 w-[38px] flex-col items-center rounded-[5px] border border-[#13bfb0] bg-[#ebf9f8] pt-3.5 pr-1 text-[15px] leading-[22.6px] text-[#13bfb0]">
      <svg width="16" height="17" viewBox="0 0 16 17" fill="none" stroke="#5ccfc4" strokeWidth="1.5"><path d="M5 9V2.5a1.5 1.5 0 0 1 3 0V6h4.5A1.8 1.8 0 0 1 14.3 8v4.5c0 2.5-1 3.5-3 3.5H7.5C5 16 3.5 13 1.5 10.5c-.8-1.5 1-2.5 2-1.5L5 10.5Z" /></svg>
      {["拖", "动", "题", "号", "排", "序"].map((c) => <span key={c}>{c}</span>)}
    </div>
  );
}

function HelpCenter() {
  return (
    <>
      <div className="absolute top-[880px] left-[1864px] flex h-[110px] w-10 flex-col items-center rounded-tl-[4px] bg-[#06c1ae] pt-[5px] text-[16px] leading-5 text-white">
        <span>帮</span><span>助</span><span>中</span><span>心</span>
        <svg className="mt-1.5" width="12" height="12" viewBox="0 0 12 12"><circle cx="6" cy="6" r="6" fill="#fff" /><path d="M7.5 3 4.5 6l3 3" stroke="#06c1ae" strokeWidth="1.2" fill="none" /></svg>
      </div>
      <div className="absolute top-[980px] left-[1830px] flex w-16 flex-col items-center">
        <div className="flex h-[22px] w-16 items-center justify-center rounded-[3px] bg-linear-to-r from-[#416bff] to-[#0a91ff] text-[9px] font-bold text-white">点击咨询</div>
        <div className="mt-0.5 text-[12px] leading-4 text-[#555]">在线客服</div>
      </div>
    </>
  );
}

function Taskbar() {
  return (
    <div className="flex h-10 shrink-0 items-center bg-[#1c1c1c] text-white">
      <div className="flex w-[51px] pl-4">
        <svg width="16" height="16" viewBox="0 0 16 16" fill="#fff"><path d="M0 2.3 6.5 1.4v6.2H0ZM7.3 1.3 16 0v7.6H7.3ZM0 8.4h6.5v6.2L0 13.7ZM7.3 8.4H16V16l-8.7-1.3Z" /></svg>
      </div>
      <div className="flex h-10 w-12 flex-col items-center">
        <div className="flex flex-1 items-center pt-0.5"><ChromeLogo size={24} /></div>
        <div className="h-0.5 w-10 bg-[#76b9ed]" />
      </div>
      <div className="ml-auto flex h-10 items-center">
        <svg className="mr-7 -mt-1" width="16" height="16" viewBox="0 0 16 16"><rect width="16" height="16" rx="2.5" fill="#2c87f8" /><circle cx="8" cy="7.5" r="4.3" fill="none" stroke="#fff" strokeWidth="2.2" /><path d="m9 9 3 3" stroke="#fff" strokeWidth="2" /><circle cx="13" cy="13" r="1.3" fill="#c8f03c" /></svg>
        <svg className="mr-2.5" width="12" height="8" viewBox="0 0 12 8" fill="none" stroke="#fff" strokeWidth="1.2"><path d="m.5 7 5.5-5.5L11.5 7" /></svg>
        <svg className="mr-2" width="16" height="14" viewBox="0 0 16 14"><path d="M0 1h4.5l2.5 6 2-4H7L8 1h8l-1 3h-3l-4 9H6Z" fill="#e33225" /><path d="M8 13.5a3 3 0 0 1 0-5 3 3 0 0 1 5-1 3 3 0 0 1 1.5 6Z" fill="#1f8fe8" /></svg>
        <svg className="mr-2" width="16" height="14" viewBox="0 0 16 14" fill="none" stroke="#fff" strokeWidth="1.1"><path d="M5 1h10.5v9H3.5V6M9.5 10v3M6 13.3h7M.5.6h4v3h-4ZM2.5 3.6V9" /></svg>
        <svg className="mr-2.5" width="16" height="14" viewBox="0 0 16 14" fill="none" stroke="#fff" strokeWidth="1.1"><path d="M.5 5v4H3l3.5 3.5v-11L3 5ZM8.5 5c.8 1.2.8 2.8 0 4M10.8 3.5c1.7 2 1.7 5 0 7" /><path d="M13 1.8c2.8 3 2.8 7.4 0 10.4" stroke="#888" /></svg>
        <div className="flex h-[22px] w-[22px] items-center justify-center rounded-full border-2 border-[#06d367] bg-[#06cf64] text-[12px] leading-none">56</div>
        <div className="ml-[11px] flex w-[60px] flex-col items-center text-[12px] leading-[20px]"><span>9:12</span><span>2025/9/3</span></div>
        <div className="relative ml-[19px] flex h-10 w-9 items-center">
          <svg width="17" height="17" viewBox="0 0 17 17"><path d="M0 0h16v12h-6l-4 4v-4H0Z" fill="#fff" /><path d="M3 3.5h10M3 6h10M3 8.5h10" stroke="#1c1c1c" strokeWidth="1.1" /></svg>
          <div className="absolute top-[19px] left-[8px] flex h-4 w-4 items-center justify-center rounded-full border border-[#888] bg-[#2a2a2a] text-[11px] leading-none font-semibold">1</div>
        </div>
        <div className="h-10 w-px bg-[#6b6b6b]" />
        <div className="w-1" />
      </div>
    </div>
  );
}

export default function App() {
  return (
    <div className={"relative flex h-[1080px] w-[1920px] flex-col overflow-hidden bg-[#dee1e9] " + UI}>
      <TabStrip />
      <Toolbar />
      <BookmarkBar />
      <div className="flex h-[919px] shrink-0 justify-center overflow-hidden bg-[#f1f1f1] pr-1.5">
        <div className="flex w-[1200px] flex-col bg-white">
          <PaperHeader />
          <div className="flex h-[839px] overflow-hidden">
            <QuestionList />
            <Rating />
          </div>
        </div>
      </div>
      <Taskbar />
      <SortHandle />
      <HelpCenter />
      <div className="absolute top-[156px] right-0 h-[109px] w-1.5 rounded-full bg-[#ced3d9]" />
    </div>
  );
}
